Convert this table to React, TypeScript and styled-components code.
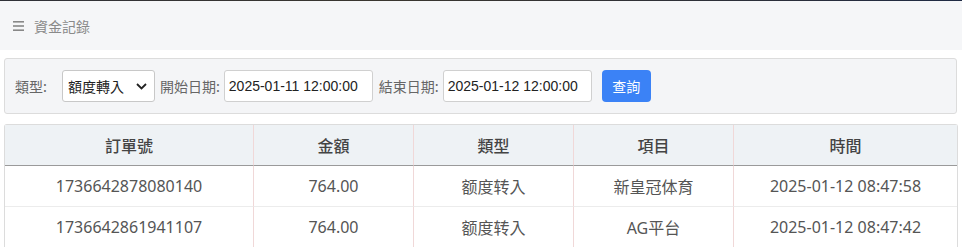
import React from "react";
import styled, { createGlobalStyle } from "styled-components";

const Global = createGlobalStyle`
  html, body { margin: 0; padding: 0; background: #fff; }
  body {
    font-family: "Noto Sans", "Noto Sans CJK TC", sans-serif;
    color: #555;
  }
  * { box-sizing: border-box; }
`;

const Page = styled.div`
  width: 962px;
  display: flex;
  flex-direction: column;
`;

const TopEdge = styled.div`
  height: 1px;
  background: linear-gradient(90deg, #2f3138, #3a3630 40%, #2b2f3a 80%, #1f2a44);
`;

const TitleBar = styled.div`
  height: 49px;
  background: #f5f6f8;
  display: flex;
  align-items: center;
  padding-left: 13px;
  gap: 10px;
  font-size: 14px;
  color: #8a8a8a;
`;

const MenuGlyph = styled.svg`
  width: 11px;
  height: 12px;
  display: block;
`;

const TitleText = styled.span`
  font-family: "Noto Sans CJK TC", sans-serif;
`;

const Body = styled.div`
  padding: 8px 5px 0 4px;
  display: flex;
  flex-direction: column;
  gap: 10px;
`;

const FilterBox = styled.div`
  height: 56px;
  background: #f4f5f7;
  border: 1px solid #dcdcdc;
  border-radius: 3px;
  display: flex;
  align-items: center;
  padding-left: 10px;
  font-size: 14px;
`;

const Label = styled.span<{ $gap: number }>`
  font-family: "Noto Sans CJK TC", sans-serif;
  color: #666;
  margin-right: ${(p) => p.$gap}px;
`;

const SelectBox = styled.div`
  width: 93px;
  height: 32px;
  background: #fff;
  border: 1px solid #c8c8c8;
  border-radius: 3px;
  display: flex;
  align-items: center;
  justify-content: space-between;
  padding: 0 7px 0 5px;
  margin-right: 5px;
  font-family: "Noto Sans CJK TC", sans-serif;
  color: #222;
`;

const Input = styled.div<{ $after: number }>`
  width: 149px;
  height: 32px;
  background: #fff;
  border: 1px solid #d0d0d0;
  border-radius: 3px;
  display: flex;
  align-items: center;
  padding-left: 4px;
  margin-right: ${(p) => p.$after}px;
  font-family: "Liberation Sans", Arial, sans-serif;
  color: #222;
`;

const Button = styled.button`
  width: 49px;
  height: 32px;
  border: none;
  border-radius: 4px;
  background: #3b82f6;
  color: #fff;
  font-size: 14px;
  font-family: "Noto Sans CJK TC", sans-serif;
  padding: 0;
`;

const Table = styled.table`
  width: 953px;
  border-collapse: separate;
  border-spacing: 0;
  table-layout: fixed;
  border-top: 1px solid #dcdcdc;
  border-left: 1px solid #dcdcdc;
  border-right: 1px solid #dcdcdc;
  border-radius: 3px 3px 0 0;
  font-size: 16px;
`;

const Th = styled.th<{ $last?: boolean }>`
  height: 41px;
  background: #eef2f5;
  color: #444;
  font-weight: 500;
  font-family: "Noto Sans CJK TC", sans-serif;
  border-bottom: 1px solid #9a9a9a;
  border-right: ${(p) => (p.$last ? "none" : "1px solid #f0d8d8")};
  padding: 0;
  text-align: center;
`;

const Td = styled.td<{ $last?: boolean }>`
  height: 41px;
  color: #555;
  border-bottom: 1px solid #ececec;
  border-right: ${(p) => (p.$last ? "none" : "1px solid #f0d8d8")};
  padding: 0;
  text-align: center;
`;

const columns = [
  { title: "訂單號", width: 249 },
  { title: "金額", width: 160 },
  { title: "類型", width: 160 },
  { title: "項目", width: 160 },
  { title: "時間", width: 223 },
];

const rows = [
  ["1736642878080140", "764.00", "额度转入", "新皇冠体育", "2025-01-12 08:47:58"],
  ["1736642861941107", "764.00", "额度转入", "AG平台", "2025-01-12 08:47:42"],
];

export default function App() {
  return (
    <Page>
      <Global />
      <TopEdge />
      <TitleBar>
        <MenuGlyph viewBox="0 0 11 12">
          <rect x="0" y="1" width="11" height="1.6" fill="#888" />
          <rect x="0" y="5.2" width="11" height="1.6" fill="#888" />
          <rect x="0" y="9.4" width="11" height="1.6" fill="#888" />
        </MenuGlyph>
        <TitleText>資金記錄</TitleText>
      </TitleBar>
      <Body>
        <FilterBox>
          <Label $gap={15}>類型:</Label>
          <SelectBox>
            <span>額度轉入</span>
            <svg width="11" height="7" viewBox="0 0 11 7">
              <path d="M1 1 L5.5 5.5 L10 1" fill="none" stroke="#222" strokeWidth="1.8" />
            </svg>
          </SelectBox>
          <Label $gap={4}>開始日期:</Label>
          <Input $after={6}>2025-01-11 12:00:00</Input>
          <Label $gap={4}>結束日期:</Label>
          <Input $after={10}>2025-01-12 12:00:00</Input>
          <Button>查詢</Button>
        </FilterBox>
        <Table>
          <colgroup>
            {columns.map((c) => (
              <col key={c.title} style={{ width: c.width }} />
            ))}
          </colgroup>
          <thead>
            <tr>
              {columns.map((c, i) => (
                <Th key={c.title} $last={i === columns.length - 1}>
                  {c.title}
                </Th>
              ))}
            </tr>
          </thead>
          <tbody>
            {rows.map((r) => (
              <tr key={r[0]}>
                {r.map((v, i) => (
                  <Td key={i} $last={i === r.length - 1}>
                    {v}
                  </Td>
                ))}
              </tr>
            ))}
          </tbody>
        </Table>
      </Body>
    </Page>
  );
}
